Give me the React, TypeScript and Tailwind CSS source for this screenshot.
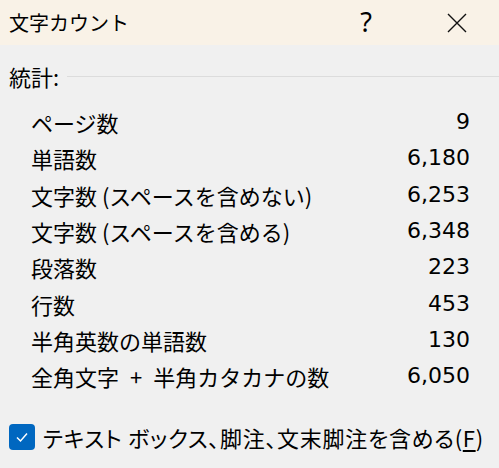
const rows: [string, string][] = [
  ["ページ数", "9"],
  ["単語数", "6,180"],
  ["文字数 (スペースを含めない)", "6,253"],
  ["文字数 (スペースを含める)", "6,348"],
  ["段落数", "223"],
  ["行数", "453"],
  ["半角英数の単語数", "130"],
  ["全角文字 + 半角カタカナの数", "6,050"],
];

function Label({ text }: { text: string }) {
  if (text.includes(" + ")) {
    const [a, b] = text.split(" + ");
    return (
      <span className="text-[22px] leading-none whitespace-pre">
        {a}
        <span className="mx-[11px]">+</span>
        {b}
      </span>
    );
  }
  return <span className="text-[22px] leading-none whitespace-pre">{text}</span>;
}

export default function App() {
  return (
    <div
      className="w-[499px] h-[468px] flex flex-col bg-[#f0f0f0] text-[#000] overflow-hidden"
      style={{ fontFamily: '"Noto Sans CJK JP", "Noto Sans", sans-serif' }}
    >
      {/* title bar */}
      <div className="h-[45px] shrink-0 flex items-center bg-[#f9f2e7] pl-[9px]">
        <span className="text-[20px] leading-none flex-1">文字カウント</span>
        <span
          className="text-[27px] leading-none w-[22px] text-center mr-[70px] mt-[-2px]"
          style={{ fontFamily: '"Noto Sans", sans-serif' }}
        >
          ?
        </span>
        <svg width="20" height="20" viewBox="0 0 20 20" className="mr-[32px]">
          <path d="M1 1 L19 19 M19 1 L1 19" stroke="#111" strokeWidth="1.4" fill="none" />
        </svg>
      </div>

      {/* body */}
      <div className="flex-1 flex flex-col pl-[9px] pr-[29px]">
        <div className="flex items-center h-[28px] mt-[17px] mr-[-29px]">
          <span className="text-[22px] leading-none">統計:</span>
          <div className="flex-1 h-px bg-[#dcdcdc] ml-[8px]" />
        </div>

        <div className="flex flex-col mt-[14px] pl-[22px]">
          {rows.map(([label, value]) => (
            <div key={label} className="flex items-center justify-between h-[36.3px]">
              <Label text={label} />
              <span
                className="text-[22px] leading-none"
                style={{ fontFamily: '"DejaVu Sans", sans-serif' }}
              >
                {value}
              </span>
            </div>
          ))}
        </div>

        <div className="flex items-center mt-[30px] mr-[-29px]">
          <div className="w-[26px] h-[26px] shrink-0 rounded-[4px] bg-[#0067c0] flex items-center justify-center">
            <svg width="14" height="14" viewBox="0 0 14 14">
              <path d="M2 7.5 L5.5 11 L12 3.5" stroke="#fff" strokeWidth="1.5" fill="none" />
            </svg>
          </div>
          <span
            className="text-[22px] leading-none ml-[8px] whitespace-nowrap tracking-[0.7px]"
            style={{ fontFeatureSettings: '"palt"' }}
          >
            テキスト ボックス、脚注、文末脚注を含める(<span className="underline underline-offset-[3px]">F</span>)
          </span>
        </div>
      </div>
    </div>
  );
}
